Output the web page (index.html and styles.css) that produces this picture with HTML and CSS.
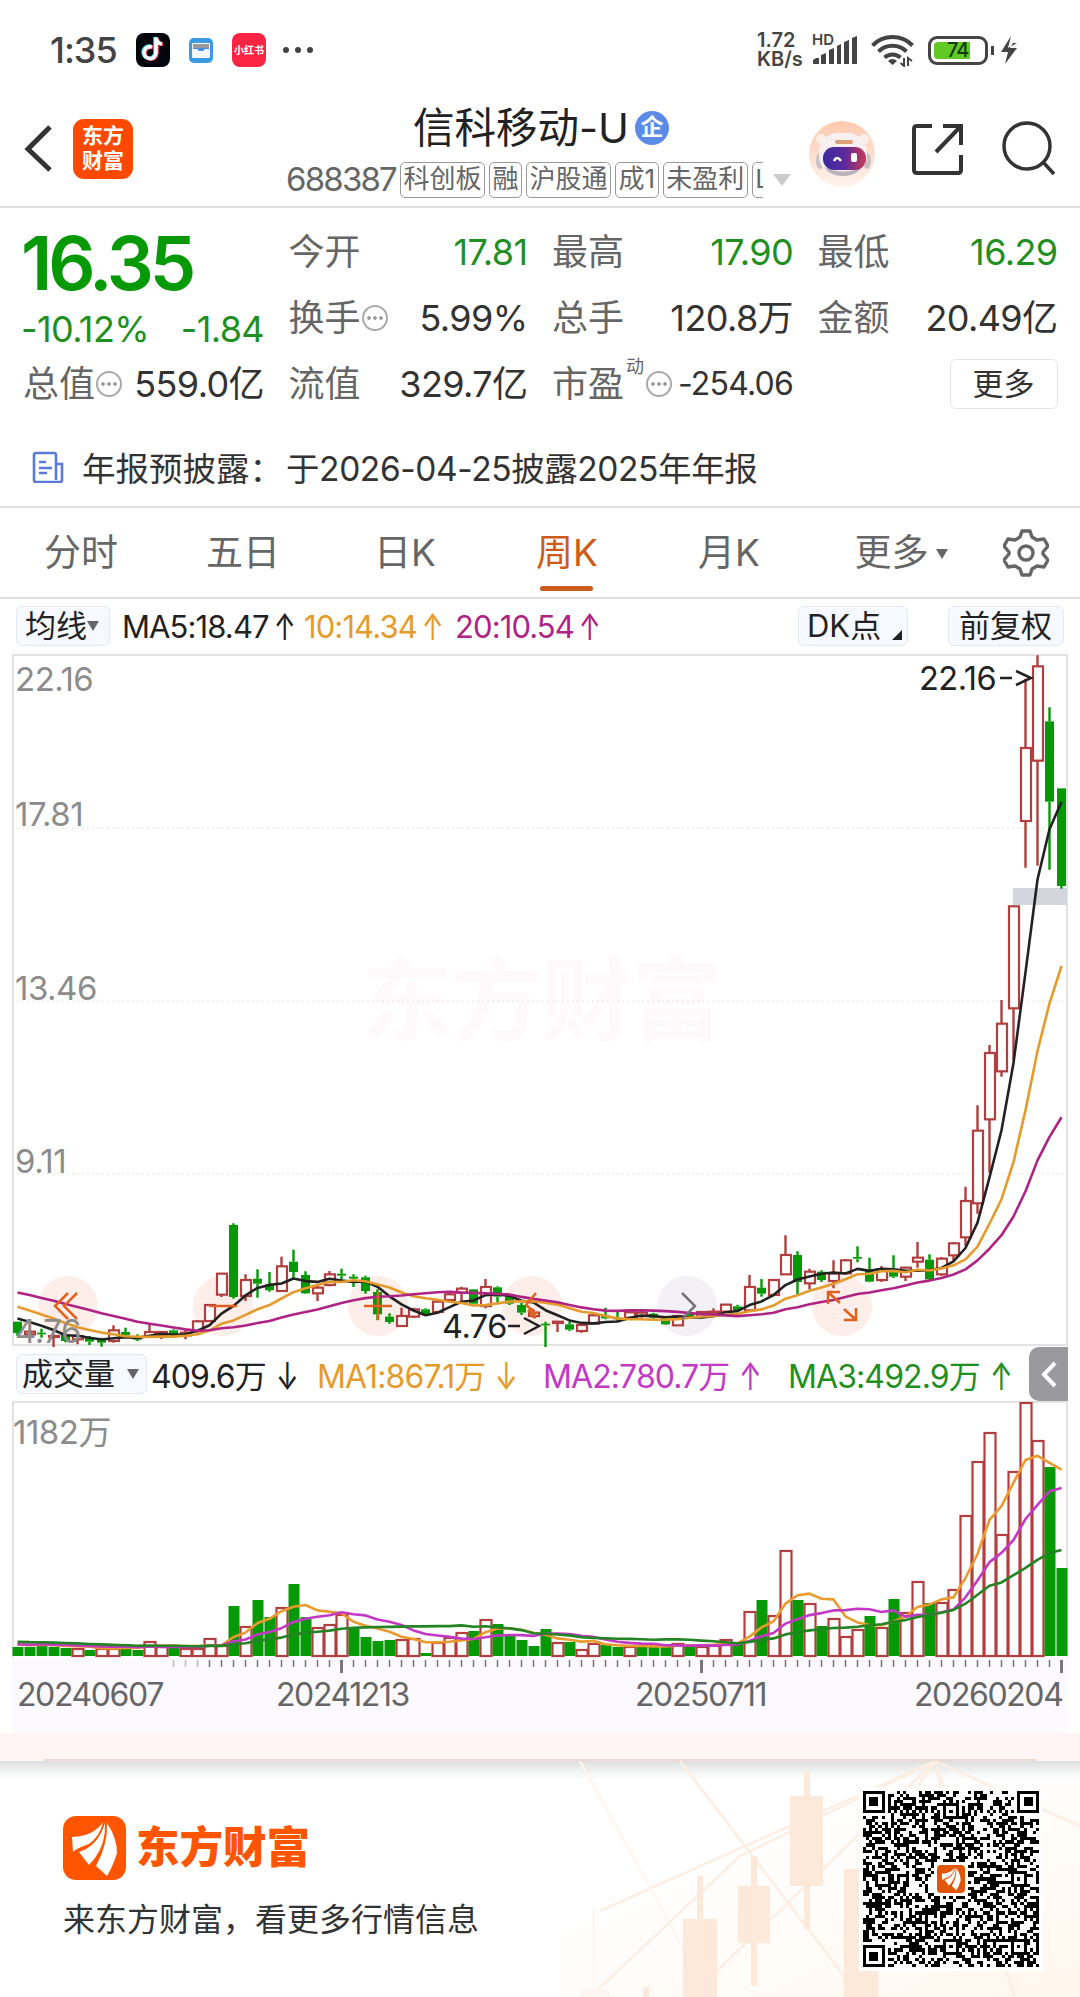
FILE: index.html
```html
<!DOCTYPE html>
<html lang="zh-CN">
<head>
  <meta charset="UTF-8">
  <meta name="viewport" content="width=device-width, initial-scale=1.0">
  <title>信科移动-U</title>
  <link rel="stylesheet" href="styles.css">
</head>
<body>
  <!-- 状态栏 -->
  <div class="status-bar">
    <span class="time">1:35</span>
    <svg class="app-tiktok" width="34" height="34" viewBox="0 0 34 34">
      <rect width="34" height="34" rx="8" fill="#05050d"/>
      <g fill="none" stroke-width="3.6">
        <path d="M17 14.5a6 6 0 1 0 4 6V5c.5 4 3 6 6 6.500" stroke="#25d8e0" transform="translate(-2 -1)"/>
        <path d="M17 14.500a6 6 0 1 0 4 6V5c.5 4 3 6 6 6.500" stroke="#f23a61"/>
        <path d="M17 14.500a6 6 0 1 0 4 6V5c.5 4 3 6 6 6.500" stroke="#fff" transform="translate(-1 -.5)"/>
      </g>
    </svg>
    <svg class="app-wallet" width="24" height="25" viewBox="0 0 24 25">
      <rect width="24" height="25" rx="5" fill="#3a9be4"/>
      <rect x="3" y="5" width="18" height="15" rx="1" fill="#f4f8fd"/>
      <path d="M4 6h16v4H4z" fill="#9a9a9c"/>
      <path d="M4 10h16v1h-4l-2 2h-4l-2-2H4z" fill="#4a8fdc"/>
    </svg>
    <span class="app-red">小红书</span>
    <span class="dots"><i></i><i></i><i></i></span>

    <div class="status-right">
      <span class="speed">1.72<br>KB/s</span>
      <div class="signal">
        <span>HD</span>
        <svg width="46" height="30" viewBox="0 0 46 30" fill="#444">
          <path d="M0 29v-4l3-2h3v6zM8 29V20l5-2v11zM16 29V15l5-2v16zM24 29V11l4-2v20zM31 29V7l5-2v24zM39 29V3l5-2v28z"/>
        </svg>
      </div>
      <svg class="wifi" width="44" height="34" viewBox="0 0 44 34">
        <g fill="none" stroke="#444" stroke-width="4">
          <path d="M1.500 12.500a28 28 0 0 1 40 0"/>
          <path d="M7.500 18.500a20 20 0 0 1 28 0"/>
          <path d="M13.500 24.500a12 12 0 0 1 16 0"/>
        </g>
        <path d="M21.500 32l-4.500-4a6 6 0 0 1 9 0z" fill="#444"/>
        <path d="M33 25v8l-3.500-3M37 33v-8l4 3" fill="none" stroke="#444" stroke-width="2"/>
      </svg>
      <div class="battery"><div class="battery-level"></div><span>74</span></div>
      <svg class="bolt" width="18" height="30" viewBox="0 0 18 30"><path d="M11 1L1 17h7L5 29 17 13h-7l3-5h4L8 13z" fill="#444"/></svg>
    </div>
  </div>

  <!-- 标题栏 -->
  <div class="header">
    <svg class="back" width="30" height="50" viewBox="0 0 30 50"><path d="M26 4L4 26l22 21" fill="none" stroke="#333" stroke-width="5"/></svg>
    <div class="brand">东方<br>财富</div>
    <div class="stock">
      <div class="stock-name">信科移动-U<span class="badge">企</span></div>
      <div class="stock-tags">
        <span class="code">688387</span>
        <div class="tags">
          <span>科创板</span><span>融</span><span>沪股通</span><span>成1</span><span>未盈利</span><span>L</span>
        </div>
        <i class="triangle"></i>
      </div>
    </div>
    <svg class="robot" width="66" height="68" viewBox="0 0 66 68">
      <defs>
        <linearGradient id="halo" x1="0" y1="0" x2="0" y2="1"><stop offset="0" stop-color="#ffc9ae"/><stop offset="1" stop-color="#fff4ee"/></linearGradient>
        <linearGradient id="visor" x1="0" y1="0" x2="1" y2="0"><stop offset="0" stop-color="#3a2a9c"/><stop offset=".5" stop-color="#5b2a9e"/><stop offset="1" stop-color="#c93b55"/></linearGradient>
      </defs>
      <circle cx="33" cy="34" r="33" fill="url(#halo)"/>
      <circle cx="12" cy="19" r="5" fill="#fbeee9"/><circle cx="55" cy="19" r="5" fill="#fbeee9"/>
      <ellipse cx="11" cy="41" rx="4" ry="8" fill="#c9c0c4"/><ellipse cx="58" cy="41" rx="4" ry="8" fill="#c9c0c4"/>
      <rect x="10" y="13" width="48" height="42" rx="19" fill="#f6f0f0"/>
      <path d="M15 47q19 9 38 0-6 9-19 9t-19-9z" fill="#bcb2b9"/>
      <rect x="26" y="20" width="18" height="4" rx="2" fill="#dfa277"/>
      <rect x="14" y="27" width="43" height="23" rx="11" fill="url(#visor)"/>
      <path d="M25 41q3-6 7 0" fill="none" stroke="#fff" stroke-width="2.500"/>
      <rect x="42" y="33" width="6" height="9" rx="2" fill="#fff"/>
    </svg>
    <svg class="share" width="52" height="54" viewBox="0 0 52 54" fill="none" stroke="#333" stroke-width="4">
      <path d="M20 4H5q-3 0-3 3v41q0 3 3 3h41q3 0 3-3V33"/><path d="M31 4h18v19M49 4L24 30"/>
    </svg>
    <svg class="search" width="54" height="56" viewBox="0 0 54 56" fill="none" stroke="#333" stroke-width="3.500">
      <circle cx="25" cy="26" r="23"/><path d="M41 42l11 12"/>
    </svg>
  </div>

  <!-- 行情数据 -->
  <div class="quote">
    <div class="cell big">16.35</div>
    <div class="cell"><label>今开</label><b class="down">17.81</b></div>
    <div class="cell"><label>最高</label><b class="down">17.90</b></div>
    <div class="cell"><label>最低</label><b class="down">16.29</b></div>
    <div class="cell change"><b class="down">-10.12%</b><b class="down">-1.84</b></div>
    <div class="cell"><label>换手</label><i class="info"></i><b>5.99%</b></div>
    <div class="cell"><label>总手</label><b>120.8万</b></div>
    <div class="cell"><label>金额</label><b>20.49亿</b></div>
    <div class="cell"><label>总值</label><i class="info"></i><b>559.0亿</b></div>
    <div class="cell"><label>流值</label><b>329.7亿</b></div>
    <div class="cell pe"><label>市盈</label><sup>动</sup><i class="info"></i><b>-254.06</b></div>
    <div class="cell"><button class="more">更多</button></div>
  </div>

  <div class="notice">
    <svg width="32" height="32" viewBox="0 0 32 32" fill="none" stroke="#5b7bdc" stroke-width="2.600">
      <path d="M24 29V4q0-2-2-2H4Q2 2 2 4v25q0 2 2 2h24q2 0 2-2V13h-6M7 11h7M7 17h13M7 22h8"/>
    </svg>
    <span>年报预披露：</span><span class="notice-text">于2026-04-25披露2025年年报</span>
  </div>

  <!-- 周期切换 -->
  <div class="tabs">
    <div class="tab">分时</div>
    <div class="tab">五日</div>
    <div class="tab">日K</div>
    <div class="tab active">周K</div>
    <div class="tab">月K</div>
    <div class="tab tab-more">更多<i class="triangle"></i></div>
    <svg class="gear" width="46" height="48" viewBox="0 0 46 48" fill="none" stroke="#666" stroke-width="3.400" stroke-linejoin="round">
      <path d="M19 2h8l2 6 5 3 7-1 4 7-5 6v2l5 6-4 7-7-1-5 3-2 6h-8l-2-6-5-3-7 1-4-7 5-6v-2l-5-6 4-7 7 1 5-3z"/><circle cx="23" cy="24" r="7"/>
    </svg>
  </div>

  <div class="ma-row">
    <span class="pill">均线<i class="triangle"></i></span>
    <span class="ma5">MA5:18.47<em>↑</em></span>
    <span class="ma10">10:14.34<em>↑</em></span>
    <span class="ma20">20:10.54<em>↑</em></span>
    <span class="pill pill-dk">DK点<i class="corner"></i></span>
    <span class="pill pill-fq">前复权</span>
  </div>

  <!-- K线图 -->
  <div class="price-chart">
    <svg id="price" width="1055" height="692" viewBox="12 0 1055 692"></svg>
  </div>

  <div class="vol-row">
    <span class="pill">成交量<i class="triangle"></i></span>
    <span class="vol">409.6万<em>↓</em></span>
    <span class="vma1">MA1:867.1万<em>↓</em></span>
    <span class="vma2">MA2:780.7万<em>↑</em></span>
    <span class="vma3">MA3:492.9万<em>↑</em></span>
    <div class="side-tab"><svg width="39" height="54" viewBox="0 0 39 54"><path d="M26 16L15 27.500 26 39" fill="none" stroke="#fff" stroke-width="4"/></svg></div>
  </div>

  <!-- 成交量 -->
  <div class="volume-chart">
    <svg id="volume" width="1055" height="255" viewBox="12 0 1055 255"></svg>
  </div>
  <div class="axis">
    <svg id="ticks" width="1056" height="18" viewBox="12 0 1056 18"></svg>
    <div class="dates"><span>20240607</span><span>20241213</span><span>20250711</span><span>20260204</span></div>
  </div>
  <div class="pink-bar"></div>

  <!-- 底部分享条 -->
  <div class="footer">
    <svg class="footer-bg" width="520" height="236" viewBox="560 0 520 236">
      <defs>
        <linearGradient id="warm" x1="0" y1="0" x2="1" y2="1"><stop offset=".3" stop-color="#fff9f2" stop-opacity="0"/><stop offset="1" stop-color="#fff6ec"/></linearGradient>
      </defs>
      <rect x="560" y="20" width="520" height="216" fill="url(#warm)"/>
      <g fill="none" stroke="#fdeee2" stroke-width="2.500">
        <path d="M935 0L600 150M935 0L740 95 590 236M935 0l145 65M935 0l80 236M935 0l-20 30M935 0l10 50M680 0l180 236M935 0L690 236"/>
        <path d="M580 0l105 190M594 236v-90" stroke="#fef6f0"/>
      </g>
      <g fill="#fde9da">
        <path d="M790 35h33v90h-33zM804 10h6v158h-6zM738 125h32v57h-32zM751 95h6v130h-6zM683 158h34v78h-34zM697 115h6v60h-6zM844 108h34v128h-34zM643 226h6v10h-6z"/>
        <path d="M580 228h30v8h-30z" fill="#fef6f0"/>
      </g>
    </svg>
    <div class="footer-text">
      <div class="footer-brand">
        <svg width="63" height="64" viewBox="0 0 63 64">
          <rect width="63" height="64" rx="13" fill="#ff5500"/>
          <g id="feather" fill="#fff"><path d="M9 21Q31 20 40 6 37 20 26 28 14 32 10 36zM16 36Q35 30 42 7 43 27 32 42L26 49zM33 50Q45 28 44 7 54 22 54 37 50 50 44 60z"/></g>
        </svg>
        <span>东方财富</span>
      </div>
      <p>来东方财富，看更多行情信息</p>
    </div>
    <svg class="qr" id="qr" width="184" height="184" viewBox="-4 -4 184 184"></svg>
  </div>

  <script>
    // 周K: [颜色, 实体上沿, 实体下沿, 最高, 最低]
    const candles = [
      ['g',362,396,362,405],['r',392,400,385,408],['g',395,400,383,410],['r',405,408,400,438],
      ['g',400,420,400,424],['r',405,415,400,430],['g',410,422,405,432],['g',413,425,410,437],
      ['r',388,420,373,425],['g',393,402,380,410],['g',408,416,400,420],['r',393,407,370,408],
      ['r',393,403,390,414],['g',388,403,385,405],['r',395,403,388,415],['r',361,390,357,395],
      ['r',312,360,310,363],['r',218,281,218,288],['g',72,288,67,293],['r',237,285,220,300],
      ['g',233,248,205,290],['g',250,268,213,272],['r',196,270,167,270],['g',182,213,146,230],
      ['g',222,277,211,278],['r',260,277,255,300],['r',220,252,210,256],['g',218,224,203,236],
      ['g',227,233,220,258],['g',229,270,224,278],['g',273,340,265,358],['g',347,363,337,368],
      ['r',345,375,320,375],['r',325,347,320,350],['g',325,340,322,345],['r',302,333,298,335],
      ['r',280,297,272,300],['r',263,275,257,305],['g',265,308,264,310],['r',258,315,234,322],
      ['g',259,287,256,305],['g',287,308,285,312],['g',312,335,305,342],['r',335,345,325,350],
      ['g',368,373,362,438],['r',362,366,360,393],['g',370,386,362,390],['r',372,390,368,395],
      ['r',343,368,340,370],['g',343,352,320,355],['g',350,355,333,360],['r',334,350,330,353],
      ['r',335,345,330,350],['g',338,350,335,353],['g',345,370,345,372],['r',345,373,343,375],
      ['g',337,348,335,350],['r',333,348,330,350],['r',332,336,322,345],['r',311,332,308,335],
      ['g',316,327,311,332],['r',258,328,222,330],['g',260,278,234,287],['r',237,282,235,283],
      ['r',162,220,103,221],['g',162,243,151,280],['r',212,247,203,265],['g',212,237,208,243],
      ['r',218,240,178,262],['r',178,217,174,220],['g',168,173,136,184],['g',205,242,170,244],
      ['r',205,237,195,243],['g',213,227,163,231],['r',200,227,197,240],['r',170,182,123,200],
      ['g',176,235,160,237],['r',173,220,168,225],['r',127,163,123,180],['r',0,109,-43,135],
      ['r',-211,7,-287,38],['r',-444,-245,-468,-85],['r',-532,-389,-603,-373],['r',-884,-578,-884,-423],
      ['r',-1359,-1140,-1567,-1000],['r',-1604,-1321,-1637,-1006],['g',-1439,-1198,-1481,-994],['g',-1238,-945,-1238,-937]
    ];
    // 成交量柱: 正数为涨, 负数为跌
    const volumes = [
      -9,-9,-15,-9,-8,8,-6,8,8,-12,-6,15,10,-9,8,8,18,11,-50,30,-56,-39,
      49,-72,-39,29,32,42,-29,-19,-15,-16,17,18,-3,14,19,24,-25,37,-32,-21,-16,-10,
      -27,14,-14,7,13,-11,-9,10,-9,-9,-11,13,-11,10,11,17,-14,45,-56,41,106,-56,
      53,-30,38,20,27,-40,29,-57,44,75,-53,54,67,141,195,224,122,185,254,216,-189,-88
    ];

    const X = i => 17.5 + 12 * i;
    const Y = v => v / 3 + 546;
    const COLORS = { r: '#b23f3f', g: '#059a05' };

    function maLine(values, history, n, color, toY) {
      const all = history.concat(values);
      const pts = values.map((_, i) => {
        const end = i + history.length + 1;
        const avg = all.slice(end - n, end).reduce((a, b) => a + b, 0) / n;
        return X(i) + ',' + toY(avg).toFixed(1);
      });
      return `<polyline points="${pts.join(' ')}" fill="none" stroke="${color}" stroke-width="2.6" stroke-linejoin="round"/>`;
    }

    function drawPrice() {
      let s = '<text class="watermark" x="542" y="378" text-anchor="middle">东方财富</text>';
      [173, 346, 519].forEach(y => {
        s += `<path d="M12 ${y}H1066" stroke="#e3e3e3" stroke-dasharray="2 3"/>`;
      });
      [68, 223, 378, 532, 687, 842].forEach((x, i) => {
        s += `<circle cx="${x}" cy="651" r="30" fill="${i == 4 ? '#f4f1f6' : '#feeee9'}"/>`;
      });
      s += '<rect x="1013" y="233" width="54" height="17" fill="#d5d5de"/>';
      candles.forEach(([c, top, bottom, high, low], i) => {
        const x = X(i), h = (bottom - top) / 3;
        s += `<path d="M${x} ${Y(high)}V${Y(top)}M${x} ${Y(bottom)}V${Y(low)}" stroke="${COLORS[c]}" stroke-width="2.4"/>`;
        if (c == 'r') {
          s += `<rect x="${x - 4.5}" y="${Y(top)}" width="10" height="${h}" fill="#fff" stroke="${COLORS.r}" stroke-width="2.2"/>`;
        } else {
          s += `<rect x="${x - 4.5}" y="${Y(top)}" width="9" height="${h}" fill="${COLORS.g}"/>`;
        }
      });
      const close = candles.map(k => k[0] == 'r' ? k[1] : k[2]);
      const before = [...Array(10).fill(231), ...Array(5).fill(282), ...Array(4).fill(342)];
      s += maLine(close, before, 5, '#222', Y);
      s += maLine(close, before, 10, '#e59b2b', Y);
      s += maLine(close, before, 20, '#ae2384', Y);
      // 图上操作按钮
      s += `<g fill="none" stroke="#e0601f" stroke-width="2.5">
        <path d="M68 638L55 651l13 13M77 638L64 651l13 13"/>
        <path d="M209 651h28M364 651h28M378 637v28"/>
        <path d="M536 638l-10 12 6 5M528 655l8 8M530 661l8-4M532 654l3 9"/>
        <path d="M840 648l-11-10M828 649v-12h12M844 654l11 10M856 653v12h-12"/>
      </g><path d="M682 638l13 13-13 13" fill="none" stroke="#77737e" stroke-width="2.5"/>`;
      [['22.16', 36], ['17.81', 171], ['13.46', 345], ['9.11', 518], ['4.76', 688]].forEach(([t, y]) => {
        s += `<text class="scale" x="15" y="${y}">${t}</text>`;
      });
      s += '<text class="mark" x="919" y="35">22.16</text><path class="arrow" d="M1000 23h12M1016 16l15 7-15 7"/>';
      s += '<text class="mark" x="442" y="683">4.76</text><path class="arrow" d="M508 671h12M524 663l15 8-15 8"/>';
      document.getElementById('price').innerHTML = s;
    }

    function drawVolume() {
      let s = '';
      volumes.forEach((v, i) => {
        const h = Math.abs(v), x = X(i);
        if (v > 0) {
          s += `<rect x="${x - 5}" y="${255 - h}" width="11" height="${h - 1}" fill="#fff" stroke="${COLORS.r}" stroke-width="2.2"/>`;
        } else {
          s += `<rect x="${x - 5}" y="${254 - h}" width="11" height="${h}" fill="${COLORS.g}"/>`;
        }
      });
      const abs = volumes.map(Math.abs), toY = v => 254 - v;
      const before = [...Array(10).fill(17), ...Array(9).fill(12)];
      s += maLine(abs, before, 5, '#eb9a2c', toY);
      s += maLine(abs, before, 10, '#c339c6', toY);
      s += maLine(abs, before, 20, '#238423', toY);
      s += '<text class="scale" x="13" y="42">1182万</text>';
      document.getElementById('volume').innerHTML = s;
    }

    function drawTicks() {
      let s = '';
      for (let i = 13; i < 88; i++) {
        const major = i % 30 == 27;
        const color = i < 16 ? '#bbb' : '#777';
        s += `<path d="M${X(i)} 3v${major ? 13 : 7}" stroke="${color}" stroke-width="${major ? 3 : 1.5}"/>`;
      }
      document.getElementById('ticks').innerHTML = s;
    }

    function drawQr() {
      const n = 57, size = 176 / n;
      let seed = 20260204, d = '';
      const ring = (x, y, cx, cy) => Math.max(Math.abs(x - cx), Math.abs(y - cy));
      const isDark = (x, y) => {
        for (const [cx, cy] of [[3, 3], [53, 3], [3, 53]]) {
          const r = ring(x, y, cx, cy);
          if (r <= 4) return r != 2 && r != 4;
        }
        for (const [cx, cy] of [[28, 6], [6, 28], [50, 28], [28, 50], [50, 50]]) {
          const r = ring(x, y, cx, cy);
          if (r <= 2) return r != 1;
        }
        if (ring(x, y, 28, 28) <= 5) return false;
        if (x == 6 || y == 6) return (x + y) % 2 == 0;
        seed = (seed * 1103515245 + 12345) % 2147483648;
        return seed / 2147483648 > 0.5;
      };
      for (let y = 0; y < n; y++) {
        for (let x = 0; x < n; x++) {
          if (isDark(x, y)) d += `M${(x * size).toFixed(2)} ${(y * size).toFixed(2)}h3.1v3.1h-3.1z`;
        }
      }
      document.getElementById('qr').innerHTML = `<rect x="-4" y="-4" width="184" height="184" fill="#fff"/>
        <path d="${d}" fill="#000" shape-rendering="crispEdges"/><rect x="74" y="74" width="28" height="28" rx="4" fill="#e0560b"/>
        <use href="#feather" transform="translate(75 74) scale(.42)"/>`;
    }

    drawPrice();
    drawVolume();
    drawTicks();
    drawQr();
  </script>
</body>
</html>
```
FILE: styles.css
```css
* {
  box-sizing: border-box;
}

body {
  margin: 0;
  width: 1080px;
  height: 1997px;
  overflow: hidden;
  background: #fff;
  color: #333;
  font-family: Inter, "Noto Sans CJK SC", sans-serif;
}

i, em, b {
  font-style: normal;
  font-weight: normal;
}

svg {
  display: block;
  flex: none;
}

.triangle {
  display: inline-block;
  border: 6px solid transparent;
  border-top: 10px solid #666;
  border-bottom: 0;
}

/* 状态栏 */
.status-bar {
  display: flex;
  align-items: center;
  height: 100px;
  padding-left: 50px;
  color: #444;
}

.time {
  width: 86px;
  font-size: 36px;
  font-weight: 500;
  letter-spacing: -1px;
}

.app-wallet {
  margin: 0 19px;
}

.app-red {
  width: 34px;
  height: 34px;
  border-radius: 8px;
  background: #fb2442;
  color: #fff;
  font-size: 10px;
  font-weight: bold;
  line-height: 34px;
  text-align: center;
  white-space: nowrap;
}

.dots {
  display: flex;
  gap: 6px;
  margin-left: 17px;
}

.dots i {
  width: 6px;
  height: 6px;
  border-radius: 50%;
  background: #444;
}

.status-right {
  display: flex;
  align-items: center;
  margin-left: auto;
  padding-right: 62px;
}

.speed {
  width: 56px;
  font-size: 20px;
  font-weight: 600;
  line-height: 19px;
}

.signal {
  position: relative;
  width: 58px;
}

.signal span {
  position: absolute;
  top: -3px;
  left: -1px;
  font-size: 15px;
  font-weight: 600;
  line-height: 15px;
}

.battery {
  position: relative;
  width: 60px;
  height: 29px;
  margin: 0 12px 0 13px;
  border: 3px solid #444;
  border-radius: 9px;
}

.battery::after {
  content: "";
  position: absolute;
  top: 7px;
  right: -9px;
  width: 3px;
  height: 9px;
  background: #444;
}

.battery-level {
  width: 36px;
  height: 17px;
  margin: 3px;
  border-radius: 4px 0 0 4px;
  background: #61c926;
}

.battery span {
  position: absolute;
  top: 0;
  left: 16px;
  color: #123b0c;
  font-size: 20px;
  font-weight: 500;
  line-height: 23px;
  letter-spacing: -1px;
}

/* 标题栏 */
.header {
  display: flex;
  height: 108px;
  border-bottom: 2px solid #dcdedf;
}

.back {
  margin: 23px 19px 0 24px;
}

.brand {
  width: 60px;
  height: 60px;
  margin-top: 19px;
  border-radius: 11px;
  background: #fd4a00;
  color: #fff;
  font-size: 21px;
  font-weight: bold;
  line-height: 25px;
  padding-top: 4px;
  text-align: center;
}

.stock {
  width: 506px;
  margin-left: 153px;
}

.stock-name {
  display: flex;
  align-items: center;
  height: 56px;
  padding-left: 127px;
  font-size: 41.5px;
  line-height: 52px;
  padding-bottom: 1px;
  color: #222;
}

.badge {
  width: 34px;
  height: 34px;
  margin: 1px 0 0 6px;
  border-radius: 50%;
  background: #5b8be6;
  color: #fff;
  font-size: 23px;
  font-weight: bold;
  line-height: 32px;
  text-align: center;
}

.stock-tags {
  display: flex;
  align-items: center;
  height: 47px;
  color: #666;
}

.code {
  width: 114px;
  font-size: 33px;
  letter-spacing: -1.800px;
  margin-top: -1px;
}

.tags {
  display: flex;
  gap: 4px;
  width: 363px;
  overflow: hidden;
}

.tags span {
  flex: none;
  height: 36px;
  padding: 0 2.5px;
  border: 1.500px solid #999;
  border-radius: 5px;
  font-size: 26px;
  line-height: 32px;
}

.stock-tags .triangle {
  margin-left: 10px;
  border-width: 12px 9px 0;
  border-top-color: #ccc;
}

.robot {
  margin: 20px 0 0 17px;
}

.share {
  margin: 22px 0 0 37px;
}

.search {
  margin: 20px 0 0 38px;
}

/* 行情数据 */
.quote {
  display: grid;
  grid-template-columns: 241px 239px 241px 240px;
  grid-template-rows: 66px 66px 66px;
  column-gap: 24.500px;
  padding: 9px 0 0 23px;
  height: 226px;
}

.cell {
  display: flex;
  align-items: center;
  position: relative;
  font-size: 36px;
  padding-top: 4px;
}

.cell label {
  font-size: 36px;
  line-height: 66px;
  color: #666;
}

.cell b {
  margin-left: auto;
  line-height: 44px;
  letter-spacing: -.6px;
  white-space: nowrap;
}

.cell .down {
  color: #1f8f1f;
}

.cell.big {
  color: #059a05;
  font-size: 74px;
  font-weight: 600;
  line-height: 74px;
  letter-spacing: -4.100px;
  padding: 25px 0 0;
  margin-left: -2px;
}

.change {
  padding-top: 26px;
}

.change b:first-child {
  margin-left: -2px;
}

.info {
  display: block;
  width: 26px;
  height: 26px;
  margin-left: 1px;
  border: 2px solid #aaa;
  border-radius: 50%;
  background:
    radial-gradient(circle at 5px 11px, #999 1.500px, transparent 2px),
    radial-gradient(circle at 11px 11px, #999 1.500px, transparent 2px),
    radial-gradient(circle at 17px 11px, #999 1.500px, transparent 2px);
}

.pe sup {
  width: 21px;
  margin-top: -34px;
  padding-left: 2px;
  font-size: 18px;
  line-height: 18px;
  color: #666;
}

.pe b {
  font-size: 32px;
  letter-spacing: -.8px;
}

.more {
  width: 108px;
  height: 50px;
  margin-left: auto;
  padding: 0;
  border: 1.500px solid #e4e4e4;
  border-radius: 6px;
  background: #fff;
  color: #333;
  font-family: inherit;
  font-size: 31px;
  line-height: 44px;
}

.notice {
  display: flex;
  align-items: center;
  height: 74px;
  padding: 0 0 7px 32px;
  border-bottom: 2px solid #dcdedf;
  font-size: 33.500px;
}

.notice span:nth-child(2) {
  width: 204px;
  margin-left: 18px;
  white-space: nowrap;
}

.notice-text {
  letter-spacing: -.4px;
}

/* 周期切换 */
.tabs {
  display: flex;
  align-items: center;
  height: 91px;
  border-bottom: 2px solid #dcdedf;
  color: #666;
  font-size: 37px;
}

.tab {
  position: relative;
  width: 162px;
  line-height: 84px;
  text-align: center;
}

.tab.active {
  color: #cf5b1b;
}

.tab.active::after {
  content: "";
  position: absolute;
  left: 54px;
  bottom: 4px;
  width: 53px;
  height: 5px;
  border-radius: 3px;
  background: #cf5b1b;
}

.tab-more {
  width: 184px;
}

.tab-more .triangle {
  margin: 0 2px 7px 7px;
}

.gear {
  margin-left: 9px;
}

/* 均线 */
.ma-row, .vol-row {
  display: flex;
  align-items: center;
  font-size: 31px;
  letter-spacing: -.9px;
  white-space: nowrap;
}

.ma-row {
  height: 55px;
  padding: 0 0 1px 16px;
  color: #222;
}

.pill {
  display: flex;
  align-items: center;
  height: 40px;
  padding-left: 8px;
  border: 1px solid #e3e8f0;
  border-radius: 6px;
  background: #f6f9ff;
  color: #222;
  font-size: 31px;
  line-height: 36px;
  letter-spacing: 0;
}

.ma-row em, .vol-row em {
  display: inline-block;
  margin-left: 3px;
  transform: scale(.85, 1.2);
}

.vol-row em {
  margin-left: 8px;
}

.ma-row .pill:first-child {
  width: 94px;
}

.ma5 { width: 182px; margin-left: 12px; }
.ma10 { width: 151px; color: #e59b2b; }
.ma20 { width: 160px; color: #ae2384; }

.pill-dk {
  position: relative;
  width: 110px;
  margin-left: 183px;
}

.corner {
  position: absolute;
  right: 5px;
  bottom: 5px;
  border-left: 10px solid transparent;
  border-bottom: 10px solid #222;
}

.pill-fq {
  width: 116px;
  margin-left: 40px;
  padding-left: 10px;
}

/* 图表 */
.price-chart {
  height: 692px;
  margin: 0 12px;
  border: 2px solid #e3e3e3;
  width: 1056px;
}

.price-chart svg, .volume-chart svg {
  margin: -1px 0 0 -2px;
  overflow: visible;
}

.price-chart svg {
  margin-top: -1.5px;
}

.scale {
  fill: #8c8c8c;
  font-size: 33px;
  letter-spacing: -.5px;
}

.mark {
  fill: #222;
  font-size: 32.5px;
  letter-spacing: -.5px;
}

.arrow {
  fill: none;
  stroke: #222;
  stroke-width: 2.500px;
}

.watermark {
  fill: #fefafb;
  font-size: 90px;
  font-weight: bold;
}

.vol-row {
  height: 55px;
  padding-left: 16px;
}

.vol-row .pill {
  width: 131px;
  padding-left: 5px;
}

.vol-row .pill .triangle {
  margin-left: 12px;
}

.vol { width: 166px; margin-left: 4px; color: #222; }
.vma1 { width: 226px; color: #e59b2b; }
.vma2 { width: 245px; color: #c339c6; }
.vma3 { width: 241px; color: #1f8f1f; }

.vol, .vma1, .vma2, .vma3 {
  font-size: 32px;
}

.side-tab {
  width: 39px;
  height: 54px;
  border-radius: 10px 0 0 10px;
  background: #9a999d;
}

.volume-chart {
  width: 1056px;
  height: 256px;
  margin: 0 12px;
  border: 2px solid #e3e3e3;
  border-bottom: 0;
}

.axis {
  height: 76px;
  margin: 0 12px;
  background: #fdfaff;
}

.dates {
  display: grid;
  grid-template-columns: 259px 359px 279px auto;
  padding-left: 5px;
  color: #666;
  font-size: 32px;
  line-height: 39px;
  letter-spacing: -1.4px;
}

.pink-bar {
  height: 28px;
  background: linear-gradient(#f3d9d0, #f3d9d0) 50% 100% / 992px 2px no-repeat #fff5f4;
}

/* 底部 */
.footer {
  display: flex;
  position: relative;
  height: 236px;
  background: linear-gradient(#dcdfdf, #f5f6f6 12px, #fff 20px);
}

.footer-bg {
  position: absolute;
  right: 0;
  top: 0;
}

.footer-text {
  padding: 55px 0 0 63px;
}

.footer-brand {
  display: flex;
  align-items: center;
  gap: 10px;
  height: 64px;
  color: #ff5500;
  font-size: 43.5px;
  font-weight: 900;
  line-height: 58px;
}

.footer-brand span {
  margin-top: -3px;
}

.footer p {
  margin: 17px 0 0;
  font-size: 32px;
  line-height: 46px;
}

.qr {
  position: relative;
  margin: 26px 37px 0 auto;
}
```
